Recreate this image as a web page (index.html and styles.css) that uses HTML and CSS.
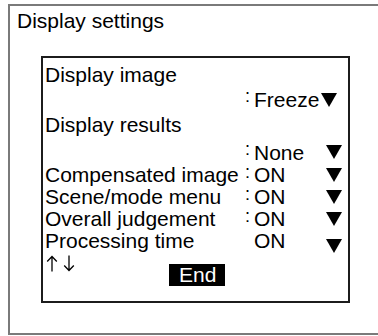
FILE: index.html
```html
<!DOCTYPE html>
<html>
<head>
<meta charset="utf-8">
<link rel="stylesheet" href="styles.css">
</head>
<body>
<div class="outer">
  <div class="title">Display settings</div>
  <div class="panel">
    <div class="row"><span class="label wide">Display image</span></div>
    <div class="row">
      <span class="label"></span><span class="colon">:</span>
      <span class="value span2">Freeze<i class="tri inline"></i></span>
    </div>
    <div class="row"><span class="label wide">Display results</span></div>
    <div class="row gap">
      <span class="label"></span><span class="colon">:</span>
      <span class="value">None</span><i class="tri"></i>
    </div>
    <div class="row tight">
      <span class="label">Compensated image</span><span class="colon">:</span>
      <span class="value">ON</span><i class="tri"></i>
    </div>
    <div class="row tight">
      <span class="label">Scene/mode menu</span><span class="colon">:</span>
      <span class="value">ON</span><i class="tri"></i>
    </div>
    <div class="row tight">
      <span class="label">Overall judgement</span><span class="colon">:</span>
      <span class="value">ON</span><i class="tri"></i>
    </div>
    <div class="row tight">
      <span class="label">Processing time</span><span class="colon"></span>
      <span class="value">ON</span><i class="tri low"></i>
    </div>
    <div class="foot">
      <span class="arrows">
        <svg class="arrow" width="12" height="17" viewBox="0 0 12 17"><path d="M6 1.5V16.5M1.2 6.5L6 1.5L10.8 6.5" fill="none" stroke="#000" stroke-width="1.3"/></svg>
        <svg class="arrow" width="12" height="17" viewBox="0 0 12 17"><path d="M6 0.5V15.5M1.2 10.5L6 15.5L10.8 10.5" fill="none" stroke="#000" stroke-width="1.3"/></svg>
      </span>
      <span class="end">End</span>
    </div>
  </div>
</div>
</body>
</html>
```
FILE: styles.css
```css
html, body {
  margin: 0;
  padding: 0;
  background: #fff;
}
body {
  font-family: "Liberation Sans", Arial, sans-serif;
  font-size: 21px;
  color: #000;
}
.outer {
  box-sizing: border-box;
  margin: 4px 0 0 8px;
  height: 331px;
  border: 2px solid #7a7a7a;
  border-right: none;
  padding: 3px 0 0 7px;
}
.title {
  line-height: 24px;
}
.panel {
  box-sizing: border-box;
  margin: 23px 0 0 24px;
  width: 309px;
  height: 247px;
  border: 2px solid #1c1c1c;
  padding: 4px 0 0 2px;
}
.row {
  display: grid;
  grid-template-columns: 199px 10px 71px 20px;
  line-height: 25px;
  height: 25px;
}
.row.gap {
  margin-top: 3px;
  height: 24px;
}
.row.tight {
  line-height: 22px;
  height: 22px;
}
.label {
  white-space: nowrap;
}
.label.wide {
  grid-column: 1 / 5;
}
.colon {
  font-size: 18px;
  position: relative;
  top: -3px;
  left: 1px;
}
.value.span2 {
  grid-column: 3 / 5;
  white-space: nowrap;
}
.tri {
  display: block;
  width: 0;
  height: 0;
  margin: 5px 0 0 1px;
  border-left: 8.5px solid transparent;
  border-right: 8.5px solid transparent;
  border-top: 14px solid #000;
}
.row.tight .tri {
  margin-top: 4px;
}
.row.tight .tri.low {
  margin-top: 9px;
}
.tri.inline {
  display: inline-block;
  margin: 0 0 0 2px;
  vertical-align: 0;
}
.foot {
  display: flex;
  align-items: flex-start;
  line-height: 22px;
}
.arrows {
  width: 123px;
  display: flex;
  gap: 5px;
  padding: 3px 0 0 1px;
}
.arrow {
  display: block;
}
.end {
  margin-top: 12px;
  background: #000;
  color: #fff;
  line-height: 22px;
  padding: 0 9px 0 10px;
}
```
